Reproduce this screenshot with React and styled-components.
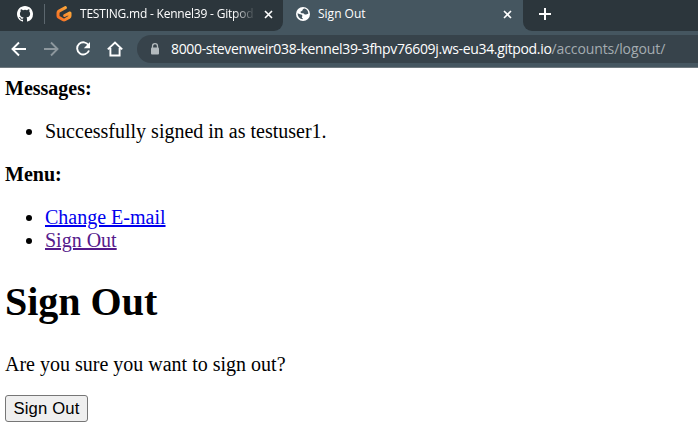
import React from 'react';
import styled, { createGlobalStyle } from 'styled-components';

const Global = createGlobalStyle`
  * { box-sizing: border-box; }
  html, body { margin: 0; background: #fff; }
  body { width: 698px; height: 434px; overflow: hidden; }
`;

const Chrome = styled.header`
  height: 68px;
  background: #455660;
  border-bottom: 1px solid #70797f;
  font-family: "Open Sans", sans-serif;
  color: #fff;
`;
const TabStrip = styled.div`
  height: 31px;
  display: flex;
`;
const BackgroundTabs = styled.div`
  width: 283px;
  display: flex;
  align-items: center;
  padding: 0 10px 3px 17px;
  background: #2c363c;
  border-bottom-right-radius: 9px;
`;
const ActiveTab = styled.div`
  width: 240px;
  display: flex;
  align-items: center;
  padding: 0 11px 3px 13px;
`;
const StripEnd = styled.div`
  flex: 1;
  display: flex;
  align-items: center;
  padding: 0 0 3px 15px;
  background: #2c363c;
  border-bottom-left-radius: 9px;
`;
const Divider = styled.div`
  width: 1px;
  height: 20px;
  margin: 0 11px 0 11px;
  background: #5c676e;
`;
const TabTitle = styled.span`
  flex: 1;
  overflow: hidden;
  white-space: nowrap;
  font-size: 12px;
  line-height: 18px;
  margin: 0 10px 0 8px;
  letter-spacing: ${(p) => p.$spacing};
  ${(p) => p.$fade && 'mask-image: linear-gradient(to right, #000 88%, transparent 101%);'}
`;
const Glyph = styled.svg`
  display: block;
  flex: none;
  width: ${(p) => p.$size}px;
  height: ${(p) => p.$size}px;
  color: ${(p) => p.$color || '#fff'};
`;
const Toolbar = styled.nav`
  height: 36px;
  display: flex;
  align-items: center;
  gap: 16px;
  padding-left: 11px;
`;
const AddressBar = styled.div`
  flex: 1;
  height: 28px;
  margin: 0 0 0 -2px;
  padding-left: 12px;
  display: flex;
  align-items: center;
  gap: 10px;
  background: #37434b;
  border-radius: 14px 0 0 14px;
`;
const Address = styled.span`
  font-size: 14px;
  line-height: 20px;
  white-space: nowrap;
  letter-spacing: -0.34px;
`;
const AddressPath = styled.span`
  color: #a4acb1;
  letter-spacing: -0.1px;
`;

const Page = styled.main`
  padding: 9px 5px 0;
  color: #000;
  font: 20px/23px "Liberation Serif", "Times New Roman", serif;
`;
const Label = styled.strong`
  display: block;
`;
const List = styled.ul`
  margin: 20px 0;
  padding-left: 40px;
`;
const Link = styled.a`
  color: ${(p) => (p.$visited ? '#551a8b' : '#0000ee')};
  text-decoration: underline;
  text-decoration-thickness: 2px;
`;
const Title = styled.h1`
  margin: 27px 0 28px;
  font-size: 40px;
  line-height: 46px;
`;
const Question = styled.p`
  margin: 0 0 19px;
`;
const SubmitButton = styled.button`
  display: block;
  width: 83px;
  height: 27px;
  padding: 0;
  border: 1px solid #767676;
  border-radius: 3px;
  background: #efefef;
  color: #000;
  font: 16.67px/24px "Liberation Sans", Arial, sans-serif;
  letter-spacing: 0.15px;
  white-space: nowrap;
`;

const GithubIcon = () => (
  <Glyph $size={16} viewBox="0 0 16 16">
    <path fill="currentColor" d="M8 0C3.58 0 0 3.58 0 8c0 3.54 2.29 6.53 5.47 7.59.4.07.55-.17.55-.38 0-.19-.01-.82-.01-1.49-2.01.37-2.53-.49-2.69-.94-.09-.23-.48-.94-.82-1.13-.28-.15-.68-.52-.01-.53.63-.01 1.08.58 1.23.82.72 1.21 1.87.87 2.33.66.07-.52.28-.87.51-1.07-1.78-.2-3.64-.89-3.64-3.95 0-.87.31-1.59.82-2.15-.08-.2-.36-1.02.08-2.12 0 0 .67-.21 2.2.82a7.6 7.6 0 0 1 4 0c1.53-1.04 2.2-.82 2.2-.82.44 1.1.16 1.92.08 2.12.51.56.82 1.27.82 2.15 0 3.07-1.87 3.75-3.65 3.95.29.25.54.73.54 1.48 0 1.07-.01 1.93-.01 2.2 0 .21.15.46.55.38A8 8 0 0 0 16 8c0-4.42-3.58-8-8-8Z" />
  </Glyph>
);
const GitpodIcon = () => (
  <Glyph $size={16} viewBox="0 0 16 16">
    <defs>
      <linearGradient id="gitpod" x1="1" y1="0" x2="0" y2="1">
        <stop stopColor="#ffb23e" />
        <stop offset="1" stopColor="#f56a22" />
      </linearGradient>
    </defs>
    <path d="M9.4 1.6 3 5.1Q2 5.7 2 6.8v3.1q0 .9.8 1.4l4.3 2.5q.9.5 1.8 0l4.2-2.4q.9-.5.9-1.4V6.9L8.7 9.5" fill="none" stroke="url(#gitpod)" strokeWidth="3" strokeLinecap="round" strokeLinejoin="round" />
  </Glyph>
);
const GlobeIcon = () => (
  <Glyph $size={14} viewBox="0 0 14 14">
    <circle cx="7" cy="7" r="7" fill="#fff" />
    <path d="M8.7 1.5C6.8 1.7 6.8 2.7 6.4 3.4 6 4.2 4.5 3.8 4.5 5c0 1.1 1.3 1.3 2.5 1.2 1.2 0 1.4 1.3 2.4 1.4.9.1 1.7-.7 2.9-.9A5.4 5.4 0 0 0 8.7 1.5ZM1.7 6.1c1.2 1.3 2.2 1.1 3.4 1.4 1.2.4 1.4 1.2 1.1 1.9-.4.8-.4 1.3.2 1.7.5.3.4.8.3 1.2A5.3 5.3 0 0 1 1.7 6.1Z" fill="#455660" />
  </Glyph>
);
const CloseIcon = () => (
  <Glyph $size={9} viewBox="0 0 9 9">
    <path d="m1 1 7 7M8 1 1 8" stroke="currentColor" strokeWidth="1.6" />
  </Glyph>
);
const PlusIcon = () => (
  <Glyph $size={14} viewBox="0 0 14 14">
    <path d="M7 1v12M1 7h12" stroke="currentColor" strokeWidth="2" />
  </Glyph>
);
const ArrowIcon = ({ forward }) => (
  <Glyph $size={16} $color={forward ? '#8d979d' : '#fff'} viewBox="0 0 16 16">
    <path d={forward ? 'M1 8h13M8 1.5 14.5 8 8 14.5' : 'M15 8H2M8 1.5 1.5 8 8 14.5'} fill="none" stroke="currentColor" strokeWidth="1.9" />
  </Glyph>
);
const ReloadIcon = () => (
  <Glyph $size={16} viewBox="0 0 16 16">
    <path d="M13.6 4.4A6.1 6.1 0 1 0 14 9.5" fill="none" stroke="currentColor" strokeWidth="1.9" />
    <path d="M15 1v6.2H8.8Z" fill="currentColor" />
  </Glyph>
);
const HomeIcon = () => (
  <Glyph $size={16} viewBox="0 0 16 16">
    <path d="M.8 8.4 8 1.5l7.2 6.9M3.4 7v7.5h9.2V7" fill="none" stroke="currentColor" strokeWidth="1.9" />
  </Glyph>
);
const LockIcon = () => (
  <Glyph $size={12} $color="#b3babe" viewBox="0 0 12 12">
    <path d="M3.5 5V3.2a2.5 2.5 0 0 1 5 0V5" fill="none" stroke="currentColor" strokeWidth="1.3" />
    <rect x="2" y="4.5" width="8" height="7" rx="1" fill="currentColor" />
  </Glyph>
);

export default function App() {
  return (
    <>
      <Global />
      <Chrome>
        <TabStrip>
          <BackgroundTabs>
            <GithubIcon />
            <Divider />
            <GitpodIcon />
            <TabTitle $fade $spacing="-0.21px">TESTING.md - Kennel39 - Gitpod</TabTitle>
            <CloseIcon />
          </BackgroundTabs>
          <ActiveTab>
            <GlobeIcon />
            <TabTitle $spacing="0px">Sign Out</TabTitle>
            <CloseIcon />
          </ActiveTab>
          <StripEnd>
            <PlusIcon />
          </StripEnd>
        </TabStrip>
        <Toolbar>
          <ArrowIcon />
          <ArrowIcon forward />
          <ReloadIcon />
          <HomeIcon />
          <AddressBar>
            <LockIcon />
            <Address>
              8000-stevenweir038-kennel39-3fhpv76609j.ws-eu34.gitpod.io
              <AddressPath>/accounts/logout/</AddressPath>
            </Address>
          </AddressBar>
        </Toolbar>
      </Chrome>
      <Page>
        <Label>Messages:</Label>
        <List>
          <li>Successfully signed in as testuser1.</li>
        </List>
        <Label>Menu:</Label>
        <List>
          <li><Link href="#email">Change E-mail</Link></li>
          <li><Link href="#logout" $visited>Sign Out</Link></li>
        </List>
        <Title>Sign Out</Title>
        <Question>Are you sure you want to sign out?</Question>
        <SubmitButton type="button">Sign Out</SubmitButton>
      </Page>
    </>
  );
}
